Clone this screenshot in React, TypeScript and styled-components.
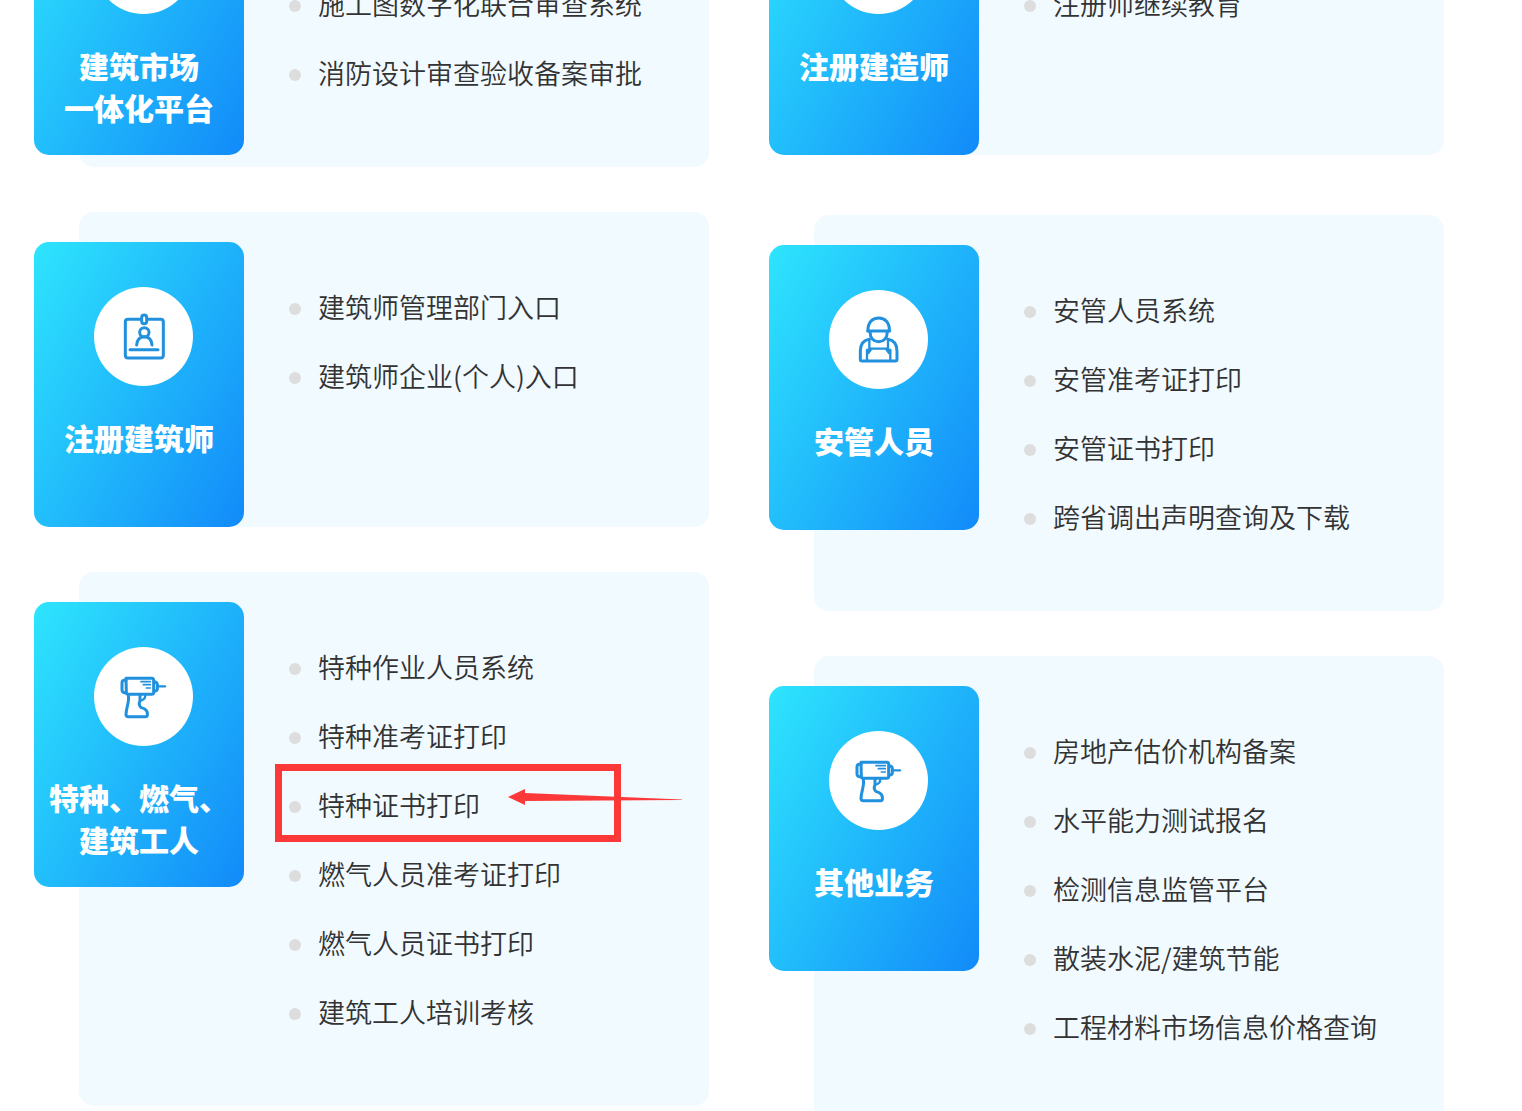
import React from "react";
import styled, { createGlobalStyle } from "styled-components";

const GlobalStyle = createGlobalStyle`
  * { box-sizing: border-box; }
  body {
    margin: 0;
    background: #fff;
    color: #333;
    font-family: "Noto Sans CJK SC", "Microsoft YaHei", sans-serif;
  }
`;

const Viewport = styled.main`
  height: 100vh;
  overflow: hidden;
`;

/* The board is shown scrolled past the start of its first row. */
const Board = styled.div`
  display: grid;
  grid-template-columns: 1fr 1fr;
  align-items: start;
  column-gap: 60px;
  margin-top: -160px;
  padding: 0 78px 0 34px;
`;

const Column = styled.div`
  display: flex;
  flex-direction: column;
`;

const Card = styled.section<{ $gap: number }>`
  display: flex;
  align-items: flex-start;
  margin: 0 0 ${(p) => p.$gap}px 45px;
  border-radius: 15px;
  background: #f1faff;
`;

const Tile = styled.div`
  flex: none;
  width: 210px;
  height: 285px;
  margin: 30px 45px 0 -45px;
  padding-top: 45px;
  border-radius: 15px;
  background: linear-gradient(118deg, #2ee5fd 0%, #128af9 100%);
`;

const Disc = styled.div`
  width: 99px;
  height: 99px;
  margin-left: 60px;
  border-radius: 50%;
  background: #fff;
`;

const Glyph = styled.svg`
  display: block;
  width: 99px;
  height: 99px;
  fill: none;
  stroke: #2190dd;
  stroke-width: 9;
  stroke-linecap: round;
  stroke-linejoin: round;
`;

const Title = styled.h2`
  margin: 30px 0 0;
  color: #fff;
  font-size: 30px;
  font-weight: 900;
  line-height: 42px;
  text-align: center;
  white-space: pre-line;
`;

const List = styled.ul<{ $skip: number }>`
  flex: 1;
  min-width: 0;
  margin: 0;
  padding: ${(p) => 62 + p.$skip * 69}px 0 58px;
  list-style: none;
`;

const Item = styled.li`
  position: relative;
  display: flex;
  align-items: center;
  gap: 17px;
  height: 69px;

  &::before {
    content: "";
    flex: none;
    width: 12px;
    height: 12px;
    border-radius: 50%;
    background: #dddddd;
  }
`;

const ItemLink = styled.a`
  padding-bottom: 4px;
  color: #333;
  font-size: 27px;
  font-weight: 350;
  line-height: 40px;
  text-decoration: none;
  white-space: nowrap;
`;

const Highlight = styled.span`
  position: absolute;
  top: -8px;
  left: -14px;
  width: 346px;
  height: 78px;
  border: 7px solid #fc3838;
  pointer-events: none;
`;

const Arrow = styled.svg`
  position: absolute;
  top: 17px;
  left: 219px;
  width: 174px;
  height: 16px;
  fill: #fc3838;
  pointer-events: none;
`;

const BadgeIcon = () => (
  <Glyph viewBox="30 20 297 297" aria-hidden="true">
    <path d="M168 117H132Q124 117 124 125V224Q124 233 132 233H230Q238 233 238 224V125Q238 117 230 117H193" />
    <rect x="173" y="104" width="15" height="26" rx="7.5" />
    <circle cx="181" cy="156" r="14" />
    <path d="M158 194Q160 169 181 169Q202 169 204 194" />
    <path d="M138 208H222" />
  </Glyph>
);

const WorkerIcon = () => (
  <Glyph viewBox="30 23 297 297" aria-hidden="true">
    <path d="M147 145C146 120 160 107 179 107C198 107 212 120 211 145" />
    <path d="M146 146H212" />
    <path d="M153 149C154 168 164 178 179 178C194 178 204 168 205 149" />
    <path d="M151 171C132 174 124 187 124 207V231Q124 236 129 236H229Q234 236 234 231V207C234 187 226 174 207 171" />
    <path d="M151 171V199H207V171" strokeWidth="7" />
    <path d="M144 234V203H151M214 234V203H207M148 212L156 201M210 212L202 201" strokeWidth="7" />
  </Glyph>
);

const DrillIcon = () => (
  <Glyph viewBox="30 20 297 297" aria-hidden="true">
    <path d="M126 114H203Q209 114 209 120V156Q209 162 203 162H133Q127 162 127 156Z" />
    <path d="M126 120H120Q114 121 114 128V148Q114 155 120 157H126" />
    <path d="M211 124Q220 126 220 132V145Q220 151 211 153" />
    <path d="M221 138H243" strokeWidth="7" />
    <path d="M171 124H199M178 133H199M187 143H199" strokeWidth="5" />
    <path d="M133 165C137 185 126 202 126 223Q127 229 133 229H185Q191 229 190 222C191 211 184 205 172 202C163 196 165 188 168 181V165" />
    <path d="M184 165Q184 178 170 181" strokeWidth="7" />
  </Glyph>
);

interface Group {
  title: string;
  icon?: React.ReactNode;
  items: string[];
  skip?: number;
  gap?: number;
  marked?: string;
}

const left: Group[] = [
  {
    title: "建筑市场\n一体化平台",
    items: ["施工图数字化联合审查系统", "消防设计审查验收备案审批"],
    skip: 1,
  },
  {
    title: "注册建筑师",
    icon: <BadgeIcon />,
    items: ["建筑师管理部门入口", "建筑师企业(个人)入口"],
  },
  {
    title: "特种、燃气、\n建筑工人",
    icon: <DrillIcon />,
    items: [
      "特种作业人员系统",
      "特种准考证打印",
      "特种证书打印",
      "燃气人员准考证打印",
      "燃气人员证书打印",
      "建筑工人培训考核",
    ],
    marked: "特种证书打印",
  },
];

const right: Group[] = [
  { title: "注册建造师", items: ["注册师继续教育"], skip: 1, gap: 60 },
  {
    title: "安管人员",
    icon: <WorkerIcon />,
    items: ["安管人员系统", "安管准考证打印", "安管证书打印", "跨省调出声明查询及下载"],
  },
  {
    title: "其他业务",
    icon: <DrillIcon />,
    items: [
      "房地产估价机构备案",
      "水平能力测试报名",
      "检测信息监管平台",
      "散装水泥/建筑节能",
      "工程材料市场信息价格查询",
    ],
  },
];

const ServiceCard = ({ title, icon, items, skip = 0, gap = 45, marked }: Group) => (
  <Card $gap={gap}>
    <Tile>
      <Disc>{icon}</Disc>
      <Title>{title}</Title>
    </Tile>
    <List $skip={skip}>
      {items.map((item) => (
        <Item key={item}>
          <ItemLink href="#">{item}</ItemLink>
          {item === marked && (
            <>
              <Highlight />
              <Arrow viewBox="0 0 174 16" aria-hidden="true">
                <path d="M0 8L17 0V4L174 10.5V11L17 12V16Z" />
              </Arrow>
            </>
          )}
        </Item>
      ))}
    </List>
  </Card>
);

export default function App() {
  return (
    <>
      <GlobalStyle />
      <Viewport>
        <Board>
          {[left, right].map((groups, i) => (
            <Column key={i}>
              {groups.map((group) => (
                <ServiceCard key={group.title} {...group} />
              ))}
            </Column>
          ))}
        </Board>
      </Viewport>
    </>
  );
}
